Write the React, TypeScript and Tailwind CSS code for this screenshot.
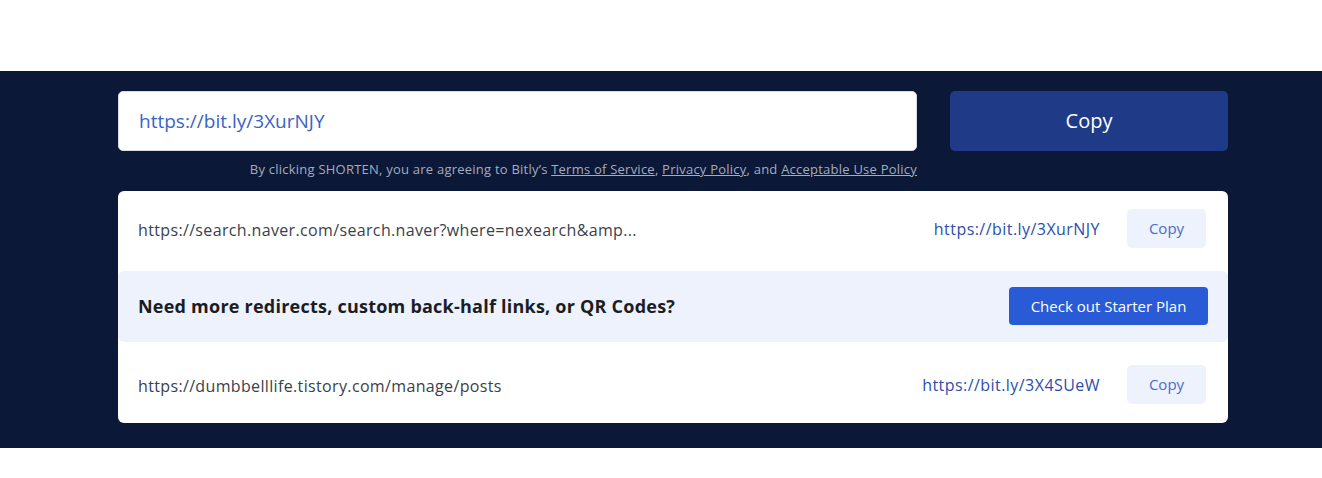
const font = { fontFamily: '"Open Sans", "Liberation Sans", sans-serif' };

function CopyChip() {
  return (
    <button className="h-[39px] w-[79px] shrink-0 rounded-[5px] bg-[#edf2fd] text-[15px] text-[#4a6cc8]">
      Copy
    </button>
  );
}

function LinkRow({ long, short, pad }: { long: string; short: string; pad: string }) {
  return (
    <div className={`flex items-center pl-5 pr-[22px] ${pad}`}>
      <span className="mt-[3px] flex-1 truncate text-[16px] tracking-[0.35px] text-[#3a3f4b]">{long}</span>
      <a className="mr-[27px] mt-[2px] text-[16px] tracking-[0.45px] text-[#2b4eae]">{short}</a>
      <CopyChip />
    </div>
  );
}

export default function App() {
  return (
    <div style={font} className="min-h-[478px] bg-white">
      <div className="h-[71px]" />
      <div className="bg-[#0c1838] pl-[118px] pr-[94px] pt-5 pb-[25px]">
        <div className="flex gap-[33px]">
          <div className="flex h-[60px] flex-1 items-center rounded-[5px] border border-[#d6dbe6] bg-white px-5 text-[19px] text-[#3a63c4]">
            https://bit.ly/3XurNJY
          </div>
          <button className="h-[60px] w-[278px] rounded-[5px] bg-[#1f3b88] text-[20px] text-white">
            Copy
          </button>
        </div>
        <div className="mt-[9px] flex pr-[311px]">
          <p className="ml-auto text-[13px] tracking-[0.23px] text-[#a4acbd]">
            By clicking SHORTEN, you are agreeing to Bitly’s{" "}
            <span className="underline">Terms of Service</span>,{" "}
            <span className="underline">Privacy Policy</span>, and{" "}
            <span className="underline">Acceptable Use Policy</span>
          </p>
        </div>
        <div className="mt-[11px] rounded-[6px] bg-white">
          <LinkRow
            long="https://search.naver.com/search.naver?where=nexearch&amp..."
            short="https://bit.ly/3XurNJY"
            pad="pt-[18px] pb-[23px]"
          />
          <div className="flex h-[71px] items-center rounded-[6px] bg-[#edf2fd] pl-5 pr-5">
            <span className="flex-1 text-[18px] font-bold tracking-[0.23px] text-[#1a1d24]">
              Need more redirects, custom back-half links, or QR Codes?
            </span>
            <button className="h-[38px] w-[199px] rounded-[4px] bg-[#2a5bd7] text-[15px] text-white">
              Check out Starter Plan
            </button>
          </div>
          <LinkRow
            long="https://dumbbelllife.tistory.com/manage/posts"
            short="https://bit.ly/3X4SUeW"
            pad="pt-[23px] pb-[19px]"
          />
        </div>
      </div>
    </div>
  );
}
